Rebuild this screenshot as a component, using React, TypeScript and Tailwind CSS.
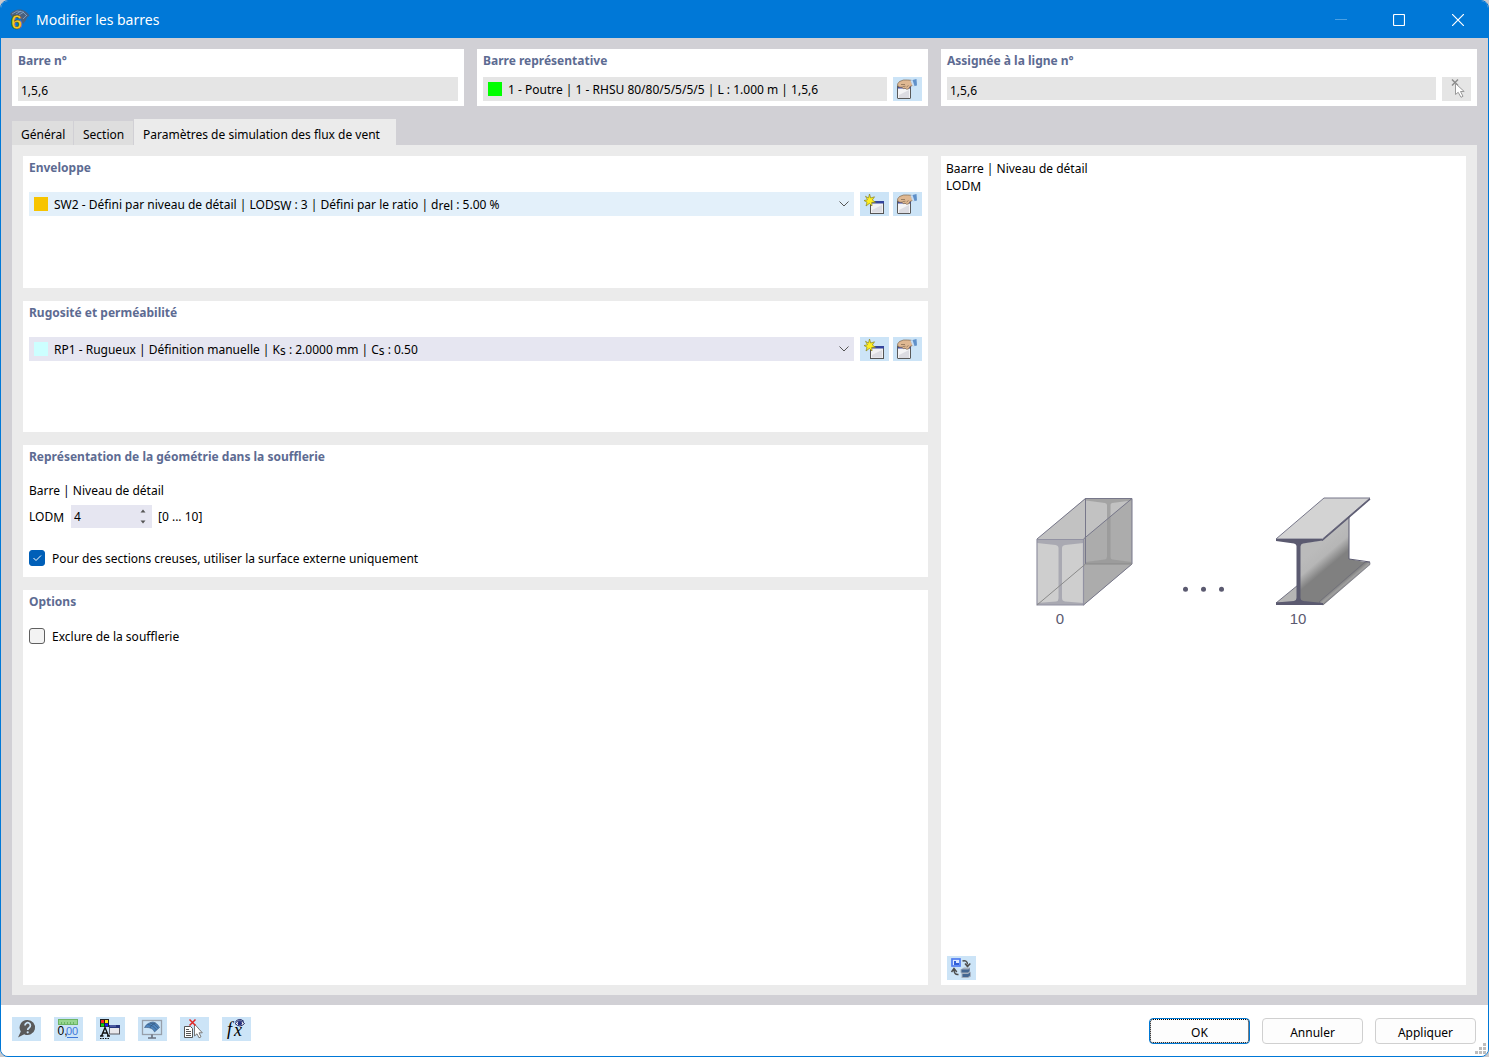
import { useState } from "react";
import type { ReactNode } from "react";

const TABS = [
  { name: "Général", width: "min-w-[62px]" },
  { name: "Section", width: "min-w-[60px]" },
  { name: "Paramètres de simulation des flux de vent", width: "min-w-[262px]" },
];

interface CardProps {
  title: string;
  className?: string;
  children: ReactNode;
}

function Card({ title, className = "", children }: CardProps) {
  return (
    <section className={`min-w-0 bg-white px-1.5 pt-1 ${className}`}>
      <h2 className="text-xs font-bold text-[#5d6b92]">{title}</h2>
      {children}
    </section>
  );
}

interface IconButtonProps {
  label: string;
  disabled?: boolean;
  children: ReactNode;
}

function IconButton({ label, disabled, children }: IconButtonProps) {
  return (
    <button
      type="button"
      aria-label={label}
      disabled={disabled}
      className="h-6 w-[29px] shrink-0 bg-[#cce4f7] disabled:bg-[#e5e5e5]"
    >
      <svg viewBox="0 0 29 24" className="block h-6 w-[29px]" aria-hidden="true">
        {children}
      </svg>
    </button>
  );
}

function EditIcon() {
  return (
    <>
      <rect x="4.5" y="8.5" width="13" height="13" rx=".5" fill="#f4f4f6" stroke="#5a5a5a" />
      <path d="M5 8h12.5v3.5H5z" fill="#3b4aa5" />
      <path d="M6 18l10-5v8H6z" fill="#dcdce2" />
      <path d="M4.5 7l2-2.5 4-1.500h4l4 .3 1.500 5-3 1.200-1.500 2.500-2 .2-1.500-1-1.700.5-1.300-1.500H7L5 9.500z" fill="#dfb892" stroke="#80674e" strokeWidth=".7" />
      <path d="M8 7.500h4M9.500 9.500l3-.3M13.500 10l2-1.500" stroke="#80674e" strokeWidth=".7" />
      <path d="M17.500 3.500L23.500 2l.5 6.500-3.500.8z" fill="#5f90c9" />
      <path d="M17.500 3.500l2-.6 2 6.200-1.800.4z" fill="#c8ddf2" />
    </>
  );
}

function NewIcon() {
  return (
    <>
      <rect x="10.500" y="9.500" width="13" height="12" fill="#f1f1f3" stroke="#555" />
      <path d="M11 9h13v2.500H11z" fill="#33459e" />
      <path d="M12 18l10-5v7.500H12z" fill="#dcdce2" />
      <path d="M9.500 2l1.200 4 3.800-1.200L12.300 8l3.200 2.200-3.800.2.300 3.600-2.600-2.600L6 14l1-3.800-3-1.700 3.500-.7L5.500 4.300l3 1.700z" fill="#ffef20" stroke="#8a8420" strokeWidth=".7" />
    </>
  );
}

function PickIcon() {
  return (
    <>
      <path d="M10 2.500l6 6M16 2.500l-6 6" stroke="#8b8b8b" strokeWidth="1.500" />
      <path d="M13.500 6.500v11l2.700-2.200 2.800 5 2-1-2.500-4.800h3.700z" fill="#fff" stroke="#999" />
    </>
  );
}

function HelpIcon() {
  return (
    <>
      <path d="M15.500 3a7.500 7.500 0 1 1-3.300 14.200L6 20.500l2.800-6A7.500 7.500 0 0 1 15.500 3z" fill="#5a5a5a" />
      <path d="M13 8.500a2.700 2.700 0 1 1 4.200 2.200c-1.300.8-1.500 1.200-1.500 2.300" fill="none" stroke="#cce4f7" strokeWidth="1.700" />
      <circle cx="15.700" cy="15.300" r="1.100" fill="#cce4f7" />
    </>
  );
}

function UnitsIcon() {
  return (
    <>
      <rect x="4.500" y="2.500" width="19" height="5" fill="#96d68f" stroke="#6cb565" />
      <path d="M7.500 5v3M10.500 5v3M13.500 5v3M16.500 5v3M19.500 5v3" stroke="#6cb565" />
      <text x="3.500" y="18" fontSize="12" fontFamily="Liberation Sans, sans-serif">0,</text>
      <text x="12" y="18" fontSize="11" fill="#3f77d8" fontFamily="Liberation Sans, sans-serif">00</text>
      <path d="M13 20.500h11" stroke="#3f77d8" />
    </>
  );
}

function DisplayIcon() {
  return (
    <>
      <rect x="4" y="2" width="9" height="8" fill="#222" />
      <path d="M5 3h3v3H5z" fill="#f22" />
      <path d="M9 3h3v3H9z" fill="#ffe800" />
      <path d="M5 6.500h3v3H5z" fill="#12d512" />
      <path d="M9 6.500h3v3H9z" fill="#2020f0" />
      <path d="M5.500 19L9 10.500l3.500 8.500M6.500 16h5M4 19h3.500M11 19h3" fill="none" stroke="#111" strokeWidth="1.400" />
      <path d="M4 21.500h10" stroke="#111" strokeDasharray="1.500 1" />
      <rect x="13.500" y="8.500" width="10" height="8.500" fill="#e8e8ec" stroke="#5c5c64" />
      <path d="M13 8h11v3H13z" fill="#26367e" />
      <path d="M14 9h6" stroke="#6f7fc4" />
    </>
  );
}

function ScreenIcon() {
  return (
    <>
      <rect x="4.500" y="3.500" width="19" height="14" fill="none" stroke="#979faa" strokeWidth="1.300" />
      <path d="M14 17.500v3M10 21h8" stroke="#6b7280" strokeWidth="1.700" />
      <path d="M6.500 10.500c2-3.800 5-5 8.500-5.500 3 .8 5 2.500 6.500 5.500l-5 4.500c-1-3-4.500-5-10-4.500z" fill="#5086c0" stroke="#3d587a" strokeWidth=".6" />
      <path d="M9.500 7.500c3.500.3 6.500 2 9 5.500M12 6c3.500.5 6 2.200 8 5M12 11c1-2.500 3-4.500 5.500-5" fill="none" stroke="#345679" strokeWidth=".7" />
    </>
  );
}

function ClearPickIcon() {
  return (
    <>
      <path d="M4.500 9.500h6l2 2v9h-8z" fill="#fff" stroke="#555" />
      <path d="M6 12.500h3M6 14.500h5M6 16.500h5M6 18.500h5" stroke="#555" />
      <path d="M14.500 7v12l2.500-2.200 2 4 2-1-2-4h3.300z" fill="#fff" stroke="#777" />
      <path d="M9.500 2.500l6 6M15.500 2.500l-6 6" stroke="#e12525" strokeWidth="1.500" />
    </>
  );
}

function FormulaIcon() {
  return (
    <>
      <text x="5" y="18" fontSize="18" fontStyle="italic" fontFamily="Liberation Serif, serif">f</text>
      <text x="12" y="19" fontSize="18" fontStyle="italic" fontFamily="Liberation Serif, serif">x</text>
      <path d="M13 6.500Q17.800 1 22.500 6.500q-4.700 5-9.500 0z" fill="#fff" stroke="#1a2060" />
      <circle cx="17.800" cy="6.300" r="2.200" fill="#27307e" />
      <path d="M13.500 4.500Q17.800.5 22 4.500" fill="none" stroke="#1a2060" />
    </>
  );
}

function SwapIcon() {
  return (
    <>
      <rect x="5" y="3" width="8" height="7" fill="#dce8ff" stroke="#4f7df0" strokeWidth="1.700" />
      <path d="M7 5h2v2h3v2H7z" fill="#315fd6" />
      <path d="M15.500 5c3-1 5 .5 5 3.500M18 7.500l2.500 3 2.800-3M11.500 18.500c-3 .5-4.500-1.500-4.500-5M4.500 16L7 12.500 9.800 16" fill="none" stroke="#4e4e4e" strokeWidth="1.500" />
      <path d="M13.500 13.500l3.500-2h6v4l1 1v4l-3 1.500h-6.500v-4.500l-1-1z" fill="#a5afbd" />
      <path d="M14.500 13.500h7l1-1.500v3l-1.500 1.500h-6.500zM15.500 18h5.500l2-1.500v3L21 21h-5.500z" fill="#456792" />
    </>
  );
}

interface SelectRowProps {
  label: string;
  value: string;
  swatch: string;
  background: string;
  children: ReactNode;
}

// The select carries plain text; the visible label on top of it has subscripts.
function SelectRow({ label, value, swatch, background, children }: SelectRowProps) {
  return (
    <div className="mt-4 flex gap-1">
      <div className={`mr-0.5 grid h-6 min-w-0 flex-1 items-center ${background}`}>
        <select aria-label={label} className="col-start-1 row-start-1 h-6 w-full opacity-0">
          <option>{value}</option>
        </select>
        <div aria-hidden="true" className="pointer-events-none col-start-1 row-start-1 flex min-w-0 items-center gap-1.5 px-[5px]">
          <span className={`size-3.5 shrink-0 ${swatch}`} />
          <span className="flex-1 truncate pt-0.5 leading-5">{children}</span>
          <svg viewBox="0 0 10 6" className="h-1.5 w-2.5 shrink-0">
            <path d="M.5.5L5 5 9.500.5" fill="none" stroke="#555" />
          </svg>
        </div>
      </div>
      <IconButton label={`${label} : nouveau`}>
        <NewIcon />
      </IconButton>
      <IconButton label={`${label} : modifier`}>
        <EditIcon />
      </IconButton>
    </div>
  );
}

function Sub({ children }: { children: ReactNode }) {
  return <sub className="-bottom-px text-xs leading-none">{children}</sub>;
}

interface CheckRowProps {
  label: string;
  checked: boolean;
  onChange: (checked: boolean) => void;
}

function CheckRow({ label, checked, onChange }: CheckRowProps) {
  return (
    <label className="flex items-center gap-[7px]">
      <span className="grid size-4 shrink-0">
        <input
          type="checkbox"
          checked={checked}
          onChange={(e) => onChange(e.target.checked)}
          className="col-start-1 row-start-1 size-4 appearance-none rounded-[3px] border border-[#5f5f5f] bg-[#f3f3f3] checked:border-[#005fb8] checked:bg-[#005fb8]"
        />
        {checked && (
          <svg viewBox="0 0 16 16" className="pointer-events-none col-start-1 row-start-1 size-4">
            <path d="M4.500 8l2.500 2.500 5-5" fill="none" stroke="#fff" />
          </svg>
        )}
      </span>
      <span className="pt-0.5 leading-[18px]">{label}</span>
    </label>
  );
}

function DetailDiagram() {
  return (
    <svg viewBox="0 0 359 158" className="h-[158px] w-[359px]" role="img" aria-label="Niveau de détail de 0 à 10">
      <defs>
        <linearGradient id="web" gradientUnits="userSpaceOnUse" x1="290" y1="54" x2="306" y2="73">
          <stop offset="0" stopColor="#bbb" />
          <stop offset=".45" stopColor="#b6b6b6" />
          <stop offset=".9" stopColor="#808080" />
        </linearGradient>
        <linearGradient id="lip" gradientUnits="userSpaceOnUse" x1="318" y1="85" x2="323" y2="91">
          <stop offset="0" stopColor="#777" />
          <stop offset=".5" stopColor="#a0a0a0" />
          <stop offset="1" stopColor="#777" />
        </linearGradient>
      </defs>

      <path d="M13 43L61.500 2H108v66L59.500 109H13z" fill="#c2c2c2" />
      <path d="M61.500 2H108L59.500 43v66L108 68V2z" fill="#bababa" />
      <path d="M59.500 43L108 2v66l-48.500 41z" fill="#acacac" />
      <path d="M13 43h46.500v66H13z" fill="#cecece" />
      <path d="M62 3h45.500v1.500L88 7q-1.500.5-1.500 2v52q0 2 2 2.500l19 2.500v2H62v-2l18.500-2.500q2.500-.5 2.500-3V9q0-1.500-2-2L62 4.500z" fill="#969696" fillOpacity=".7" />
      <path d="M13 44h46.500v3L41 49q-3 .5-3 3v50q0 3 3 3.500l18.500 1.500v2H13v-2l19-1.500q2.500-.5 2.500-3V52q0-2.500-3-3L13 47z" fill="#a9a9b2" />
      <g fill="none" stroke="#77778a" strokeWidth="1">
        <path d="M13 43.500h46.500V109H13z" strokeWidth="1.200" stroke="#9292a2" />
        <path d="M61.500 68V2.500H108V68L59.500 109" />
        <path d="M13 43L61.500 2.500M59.500 43L108 2.500M61.500 68V2.500" />
        <path d="M13 109L61.500 68H108" stroke="#8a8a8a" />
      </g>

      <circle cx="161.500" cy="93.300" r="2.500" fill="#5b5a70" />
      <circle cx="179.500" cy="93.300" r="2.500" fill="#5b5a70" />
      <circle cx="197.500" cy="93.300" r="2.500" fill="#5b5a70" />

      <path d="M252 107l22-18v18z" fill="#b5b5b5" stroke="#5b5a70" strokeWidth=".8" />
      <path d="M276 47.500l23-3.500 26-23v42l21 4-47 42-23-4z" fill="url(#web)" />
      <path d="M295 106l46-40 5 .5v2L299 109z" fill="url(#lip)" stroke="#676775" strokeWidth=".6" />
      <path d="M325 19v44l21 3" fill="none" stroke="#5b5a70" />
      <path d="M252 43L300 2h46l-47.500 41z" fill="#d3d3d3" stroke="#77778a" />
      <path d="M298 44.500L346 3" stroke="#5b5a70" strokeWidth="1.500" />
      <path d="M252 43h46.500v1.500L279 47.500q-2.500.5-2.500 3v51q0 3 3 3.500l19.500 2V109H252v-2.500l18-1.500q2.500-.5 2.500-3V50q0-2-2.500-2.500l-18-2.500z" fill="#5b5a70" />

      <g fontFamily="Liberation Sans, sans-serif" fontSize="15" fill="#5b5a70" textAnchor="middle">
        <text x="36" y="128">0</text>
        <text x="274" y="128">10</text>
      </g>
    </svg>
  );
}

function TitleBar() {
  return (
    <header className="flex h-[37px] shrink-0 items-center bg-[#0078d7] pl-2 text-white">
      <svg viewBox="0 0 22 28" className="mr-[5px] h-7 w-[22px]" aria-hidden="true">
        <path d="M1 8q4-5 11-4.500 5 1 8.500 6l-2.500 2q-1 4-4 6.500L10 10l-7 1z" fill="#48617f" />
        <path d="M3 8l5-3 6 1 4 4M7 8l5-3M10 9l5-3M14 13l4-4" fill="none" stroke="#8aa7c9" strokeWidth=".8" />
        <text x="2" y="23" fontSize="20" fontWeight="bold" fontFamily="Liberation Sans, sans-serif" fill="#f5ca26" stroke="#544716" strokeWidth=".5">6</text>
      </svg>
      <h1 className="flex-1 text-sm leading-5">Modifier les barres</h1>
      <button type="button" aria-label="Réduire" disabled className="grid h-full w-[58px] place-items-center">
        <svg viewBox="0 0 12 12" className="size-3">
          <path d="M0 5.500h12" stroke="#4ba0e3" />
        </svg>
      </button>
      <button type="button" aria-label="Agrandir" className="grid h-full w-[58px] place-items-center">
        <svg viewBox="0 0 12 12" className="size-3">
          <rect x=".5" y=".5" width="11" height="11" rx="1" fill="none" stroke="#fff" strokeWidth="1.200" />
        </svg>
      </button>
      <button type="button" aria-label="Fermer" className="grid h-full w-[60px] place-items-center">
        <svg viewBox="0 0 12 12" className="size-3">
          <path d="M0 0l12 12M12 0L0 12" stroke="#fff" strokeWidth="1.200" />
        </svg>
      </button>
    </header>
  );
}

function Footer() {
  return (
    <footer className="relative flex h-[51px] shrink-0 items-start justify-between bg-white pt-3 pr-3 pl-[11px]">
      <div className="flex gap-[13px]">
        <IconButton label="Aide">
          <HelpIcon />
        </IconButton>
        <IconButton label="Unités">
          <UnitsIcon />
        </IconButton>
        <IconButton label="Affichage">
          <DisplayIcon />
        </IconButton>
        <IconButton label="Vue">
          <ScreenIcon />
        </IconButton>
        <IconButton label="Annuler la sélection">
          <ClearPickIcon />
        </IconButton>
        <IconButton label="Formules">
          <FormulaIcon />
        </IconButton>
      </div>
      <div className="flex gap-3 pt-px">
        <button type="button" className="h-[26px] w-[101px] rounded border border-[#0078d4] bg-[#fdfdfd] pt-[3px] outline-1 -outline-offset-2 outline-black outline-dotted">
          OK
        </button>
        <button type="button" className="h-[26px] w-[101px] rounded border border-[#d0d0d0] bg-[#fdfdfd] pt-[3px]">
          Annuler
        </button>
        <button type="button" className="h-[26px] w-[101px] rounded border border-[#d0d0d0] bg-[#fdfdfd] pt-[3px]">
          Appliquer
        </button>
      </div>
      <svg viewBox="0 0 11 11" className="absolute right-0.5 bottom-0.5 size-[11px]" aria-hidden="true">
        <path d="M8 0h3v3H8zM4 4h3v3H4zM8 4h3v3H8zM0 8h3v3H0zM4 8h3v3H4zM8 8h3v3H8z" fill="#bdbdbd" />
      </svg>
    </footer>
  );
}

export default function App() {
  const [tab, setTab] = useState(2);
  const [lod, setLod] = useState(4);
  const [outerOnly, setOuterOnly] = useState(true);
  const [exclude, setExclude] = useState(false);

  const changeLod = (value: number) => setLod(Math.min(10, Math.max(0, value)));

  return (
    <div className="min-h-screen bg-[#c9c9cd] font-['Noto_Sans',sans-serif] text-xs text-black">
      <div className="flex min-h-screen flex-col overflow-hidden rounded-lg border border-[#0078d7] bg-[#d1d0d5]">
        <TitleBar />

        <main className="flex flex-1 flex-col px-[11px] pt-[11px] pb-2.5">
          <div className="grid grid-cols-[452fr_451fr_536fr] gap-[13px]">
            <Card title="Barre n°" className="pb-[5px]">
              <input aria-label="Barre n°" readOnly value="1,5,6" className="mt-2 block h-6 w-full bg-[#e5e5e5] px-[3px] pt-0.5" />
            </Card>
            <Card title="Barre représentative" className="pb-[5px]">
              <div className="mt-2 flex gap-1.5">
                <div className="flex h-6 min-w-0 flex-1 items-center gap-1.5 bg-[#e5e5e5] pl-[5px]">
                  <span className="size-3.5 shrink-0 bg-[#00ff00]" />
                  <input
                    aria-label="Barre représentative"
                    readOnly
                    value="1 - Poutre | 1 - RHSU 80/80/5/5/5/5 | L : 1.000 m | 1,5,6"
                    className="h-6 min-w-0 flex-1 bg-transparent"
                  />
                </div>
                <IconButton label="Modifier la barre">
                  <EditIcon />
                </IconButton>
              </div>
            </Card>
            <Card title="Assignée à la ligne n°" className="pb-[5px]">
              <div className="mt-2 flex gap-1.5">
                <input aria-label="Assignée à la ligne n°" readOnly value="1,5,6" className="block h-[23px] min-w-0 flex-1 bg-[#e5e5e5] px-[3px] pt-[3px]" />
                <IconButton label="Sélectionner la ligne" disabled>
                  <PickIcon />
                </IconButton>
              </div>
            </Card>
          </div>

          <div role="tablist" className="mt-[13px] flex items-end">
            {TABS.map(({ name, width }, i) => (
              <button
                key={name}
                type="button"
                role="tab"
                aria-selected={tab === i}
                onClick={() => setTab(i)}
                className={`pl-[9px] text-left ${width} ${
                  tab === i ? "h-[26px] bg-[#ebebeb] pt-1.5 pr-[9px]" : "h-6 border-r border-[#d1d0d5] bg-[#dedede] pt-1 pr-1.5"
                }`}
              >
                {name}
              </button>
            ))}
          </div>

          <div className="grid flex-1 grid-cols-[905fr_525fr] gap-[13px] bg-[#ebebeb] px-[11px] pt-[11px] pb-2.5">
            <div className="flex min-w-0 flex-col gap-[13px]">
              <Card title="Enveloppe" className="min-h-[132px]">
                <SelectRow
                  label="Enveloppe"
                  value="SW2 - Défini par niveau de détail | LODSW : 3 | Défini par le ratio | drel : 5.00 %"
                  swatch="bg-[#f7c400]"
                  background="bg-[#e3f0fa]"
                >
                  SW2 - Défini par niveau de détail | LOD<Sub>SW</Sub> : 3 | Défini par le ratio | d<Sub>rel</Sub> : 5.00 %
                </SelectRow>
              </Card>

              <Card title="Rugosité et perméabilité" className="min-h-[131px]">
                <SelectRow
                  label="Rugosité et perméabilité"
                  value="RP1 - Rugueux | Définition manuelle | Ks : 2.0000 mm | Cs : 0.50"
                  swatch="bg-[#ccffff]"
                  background="bg-[#e6e6f1]"
                >
                  RP1 - Rugueux | Définition manuelle | K<Sub>s</Sub> : 2.0000 mm | C<Sub>s</Sub> : 0.50
                </SelectRow>
              </Card>

              <Card title="Représentation de la géométrie dans la soufflerie" className="min-h-[132px]">
                <p className="mt-4 leading-5">Barre | Niveau de détail</p>
                <div className="mt-1 flex h-[23px] items-center">
                  <label htmlFor="lod" className="w-[42px] leading-5">
                    LOD<Sub>M</Sub>
                  </label>
                  <div className="mr-1.5 flex h-[23px] w-[81px] items-center bg-[#e6e6f1] pr-1">
                    <input
                      id="lod"
                      type="number"
                      min={0}
                      max={10}
                      value={lod}
                      onChange={(e) => changeLod(Number(e.target.value))}
                      className="h-[23px] min-w-0 flex-1 appearance-none bg-transparent pl-[3px] [-moz-appearance:textfield] [&::-webkit-inner-spin-button]:appearance-none"
                    />
                    <div className="flex flex-col">
                      <button type="button" aria-label="Augmenter" onClick={() => changeLod(lod + 1)} className="grid h-[11px] w-2.5 place-items-center">
                        <svg viewBox="0 0 6 4" className="h-1 w-1.5">
                          <path d="M.5 3.500L3 .5l2.500 3z" fill="#555" />
                        </svg>
                      </button>
                      <button type="button" aria-label="Diminuer" onClick={() => changeLod(lod - 1)} className="grid h-[11px] w-2.5 place-items-center">
                        <svg viewBox="0 0 6 4" className="h-1 w-1.5">
                          <path d="M.5.5L3 3.500l2.500-3z" fill="#555" />
                        </svg>
                      </button>
                    </div>
                  </div>
                  <span>[0 ... 10]</span>
                </div>
                <div className="mt-5">
                  <CheckRow
                    label="Pour des sections creuses, utiliser la surface externe uniquement"
                    checked={outerOnly}
                    onChange={setOuterOnly}
                  />
                </div>
              </Card>

              <Card title="Options" className="flex-1">
                <div className="mt-4">
                  <CheckRow label="Exclure de la soufflerie" checked={exclude} onChange={setExclude} />
                </div>
              </Card>
            </div>

            <aside className="flex min-w-0 flex-col bg-white px-[5px] pt-1 pb-[5px]">
              <p className="leading-[17px]">
                Baarre | Niveau de détail
                <br />
                LOD<Sub>M</Sub>
              </p>
              <div className="flex flex-1 items-center justify-center">
                <DetailDiagram />
              </div>
              <div className="flex pl-px">
                <IconButton label="Changer l'image">
                  <SwapIcon />
                </IconButton>
              </div>
            </aside>
          </div>
        </main>

        <Footer />
      </div>
    </div>
  );
}
